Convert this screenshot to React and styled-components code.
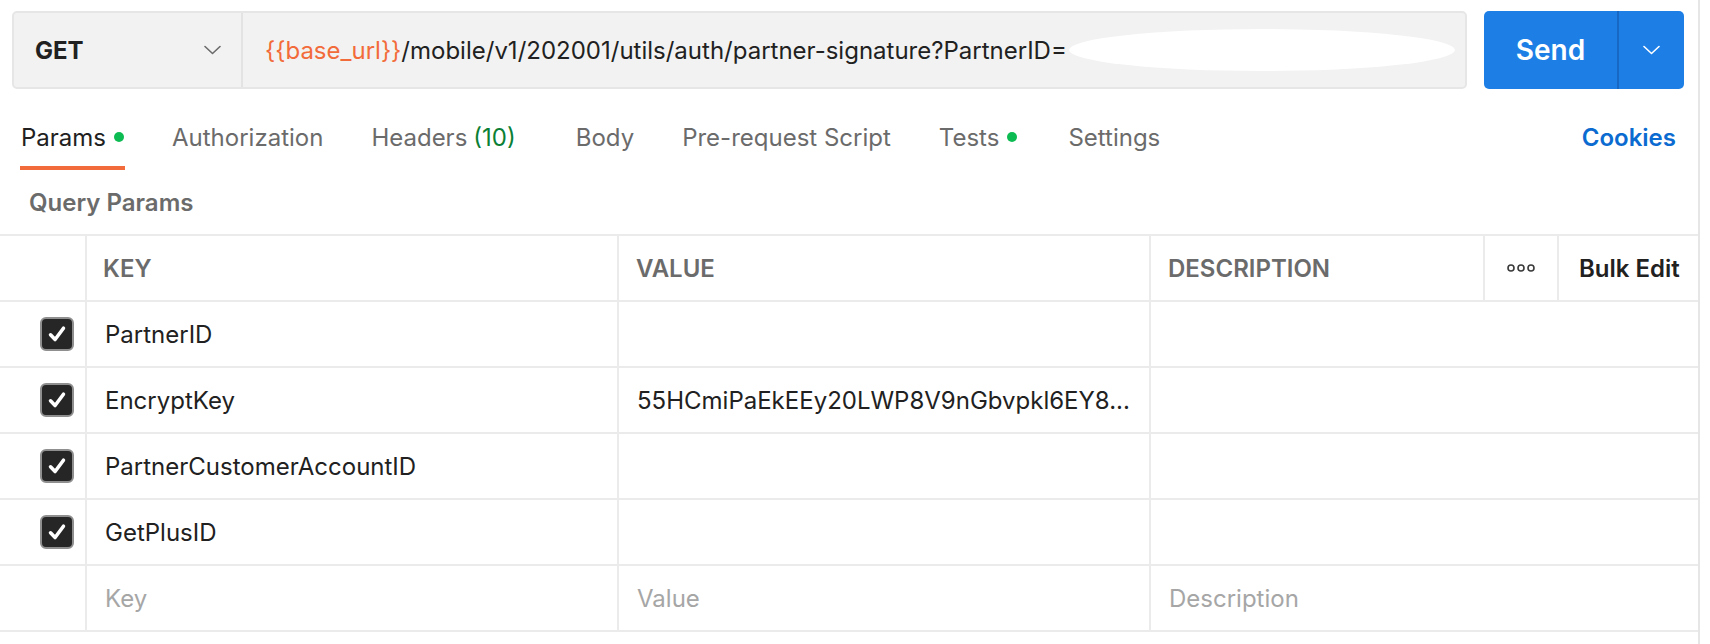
import React from "react";
import styled, { createGlobalStyle } from "styled-components";

const GlobalStyle = createGlobalStyle`
  body {
    margin: 0;
    background: #ffffff;
    font-family: Inter, "Noto Sans", "Liberation Sans", sans-serif;
    color: #212121;
  }
`;

const COLS = "85px 532px 532px 334px 74px 141px";

const Page = styled.div`
  width: 1700px;
  min-height: 644px;
  box-sizing: border-box;
  border-right: 2px solid #e6e6e6;
`;

const TopBar = styled.div`
  display: flex;
  gap: 17px;
  padding: 11px 14px 0 12px;
`;

const UrlBar = styled.div`
  flex: 1;
  height: 78px;
  box-sizing: border-box;
  display: flex;
  align-items: center;
  background: #f2f2f2;
  border: 2px solid #e6e6e6;
  border-radius: 5px;
  overflow: hidden;
`;

const Method = styled.div`
  width: 229px;
  height: 100%;
  box-sizing: border-box;
  display: flex;
  align-items: center;
  justify-content: space-between;
  padding: 0 20px 0 21px;
  border-right: 2px solid #e3e3e3;
  font-size: 24px;
  font-weight: 700;
  color: #212121;
`;

const UrlText = styled.div`
  flex: 1;
  display: flex;
  align-items: center;
  padding-left: 22px;
  font-size: 24px;
  color: #212121;
  white-space: nowrap;
  overflow: hidden;
`;

const Variable = styled.span`
  color: #f26b3a;
`;

const Redaction = styled.span`
  display: inline-block;
  width: 386px;
  height: 42px;
  margin-left: 2px;
  background: #ffffff;
  border-radius: 50%;
`;

const SendGroup = styled.div`
  width: 200px;
  height: 78px;
  display: flex;
  background: #1d7fe6;
  border-radius: 5px;
  color: #ffffff;
`;

const SendLabel = styled.div`
  width: 133px;
  display: flex;
  align-items: center;
  justify-content: center;
  font-size: 28px;
  font-weight: 600;
  border-right: 2px solid #1768c4;
`;

const SendMore = styled.div`
  flex: 1;
  display: flex;
  align-items: center;
  justify-content: center;
`;

const Tabs = styled.div`
  display: flex;
  align-items: flex-start;
  margin-top: 19px;
  padding: 0 22px 0 20px;
`;

const Tab = styled.div`
  height: 62px;
  box-sizing: border-box;
  display: flex;
  align-items: center;
  gap: 8px;
  margin-right: ${(p) => p.$gap ?? 46}px;
  padding: 0 1px;
  font-size: 24px;
  color: ${(p) => (p.$active ? "#212121" : "#6b6b6b")};
  border-bottom: 4px solid ${(p) => (p.$active ? "#f26b3a" : "transparent")};
`;

const Count = styled.span`
  color: #0a7f35;
  margin-left: -2px;
`;

const Dot = styled.span`
  width: 10px;
  height: 10px;
  border-radius: 50%;
  background: #0cbb52;
`;

const Cookies = styled.div`
  margin-left: auto;
  height: 58px;
  display: flex;
  align-items: center;
  font-size: 24px;
  font-weight: 600;
  color: #0b6bd0;
`;

const SectionTitle = styled.div`
  margin: 17px 0 0 29px;
  line-height: 32px;
  font-size: 24px;
  font-weight: 600;
  color: #6b6b6b;
`;

const Table = styled.div`
  margin-top: 15px;
  border-bottom: 2px solid #ebebeb;
`;

const Row = styled.div`
  display: grid;
  grid-template-columns: ${COLS};
  height: 66px;
  box-sizing: border-box;
  border-top: 2px solid #ebebeb;
`;

const Cell = styled.div`
  display: flex;
  align-items: center;
  justify-content: ${(p) => p.$align || "flex-start"};
  padding: 0 ${(p) => p.$padR || 0}px 0 ${(p) => p.$padL ?? 18}px;
  border-left: ${(p) => (p.$first ? "none" : "2px solid #ebebeb")};
  grid-column: ${(p) => (p.$span ? `span ${p.$span}` : "auto")};
  font-size: 24px;
  color: ${(p) => (p.$placeholder ? "#a6a6a6" : "#212121")};
  white-space: nowrap;
  overflow: hidden;
`;

const HeadCell = styled(Cell)`
  font-weight: 600;
  color: ${(p) => (p.$dark ? "#212121" : "#6b6b6b")};
`;

const Box = styled.span`
  width: 34px;
  height: 34px;
  box-sizing: border-box;
  display: flex;
  align-items: center;
  justify-content: center;
  background: #262626;
  border: 2px solid #8f8f8f;
  border-radius: 6px;
`;

const Chevron = ({ color }) => (
  <svg width="17" height="10" viewBox="0 0 17 10" fill="none">
    <polyline points="1,1.5 8.5,8.5 16,1.5" stroke={color} strokeWidth="1.6" strokeLinecap="round" strokeLinejoin="round" />
  </svg>
);

const Check = () => (
  <Box>
    <svg width="22" height="22" viewBox="0 0 16 16" fill="none">
      <polyline points="3.3,8.6 6.6,12 12.7,3.8" stroke="#ffffff" strokeWidth="2.6" strokeLinecap="round" strokeLinejoin="round" />
    </svg>
  </Box>
);

const Dots = () => (
  <svg width="28" height="8" viewBox="0 0 28 8" fill="none">
    {[4, 14, 24].map((cx) => (
      <circle key={cx} cx={cx} cy="4" r="3" stroke="#3a3a3a" strokeWidth="1.6" />
    ))}
  </svg>
);

const params = [
  { key: "PartnerID", value: "" },
  { key: "EncryptKey", value: "55HCmiPaEkEEy20LWP8V9nGbvpkl6EY8..." },
  { key: "PartnerCustomerAccountID", value: "" },
  { key: "GetPlusID", value: "" },
];

export default function App() {
  return (
    <Page>
      <GlobalStyle />
      <TopBar>
        <UrlBar>
          <Method>
            GET
            <Chevron color="#6b6b6b" />
          </Method>
          <UrlText>
            <Variable>{"{{base_url}}"}</Variable>
            /mobile/v1/202001/utils/auth/partner-signature?PartnerID=
            <Redaction />
          </UrlText>
        </UrlBar>
        <SendGroup>
          <SendLabel>Send</SendLabel>
          <SendMore>
            <Chevron color="#ffffff" />
          </SendMore>
        </SendGroup>
      </TopBar>

      <Tabs>
        <Tab $active>
          Params <Dot />
        </Tab>
        <Tab>Authorization</Tab>
        <Tab $gap={58}>
          Headers <Count>(10)</Count>
        </Tab>
        <Tab>Body</Tab>
        <Tab>Pre-request Script</Tab>
        <Tab $gap={49}>
          Tests <Dot />
        </Tab>
        <Tab>Settings</Tab>
        <Cookies>Cookies</Cookies>
      </Tabs>

      <SectionTitle>Query Params</SectionTitle>

      <Table>
        <Row>
          <HeadCell $first />
          <HeadCell $padL={16}>KEY</HeadCell>
          <HeadCell $padL={17}>VALUE</HeadCell>
          <HeadCell $padL={17}>DESCRIPTION</HeadCell>
          <HeadCell $padL={0} $align="center">
            <Dots />
          </HeadCell>
          <HeadCell $padL={20} $dark>
            Bulk Edit
          </HeadCell>
        </Row>
        {params.map((p) => (
          <Row key={p.key}>
            <Cell $first $padL={0} $padR={11} $align="flex-end">
              <Check />
            </Cell>
            <Cell>{p.key}</Cell>
            <Cell>{p.value}</Cell>
            <Cell $span={3} />
          </Row>
        ))}
        <Row>
          <Cell $first />
          <Cell $placeholder>Key</Cell>
          <Cell $placeholder>Value</Cell>
          <Cell $span={3} $placeholder>
            Description
          </Cell>
        </Row>
      </Table>
    </Page>
  );
}
